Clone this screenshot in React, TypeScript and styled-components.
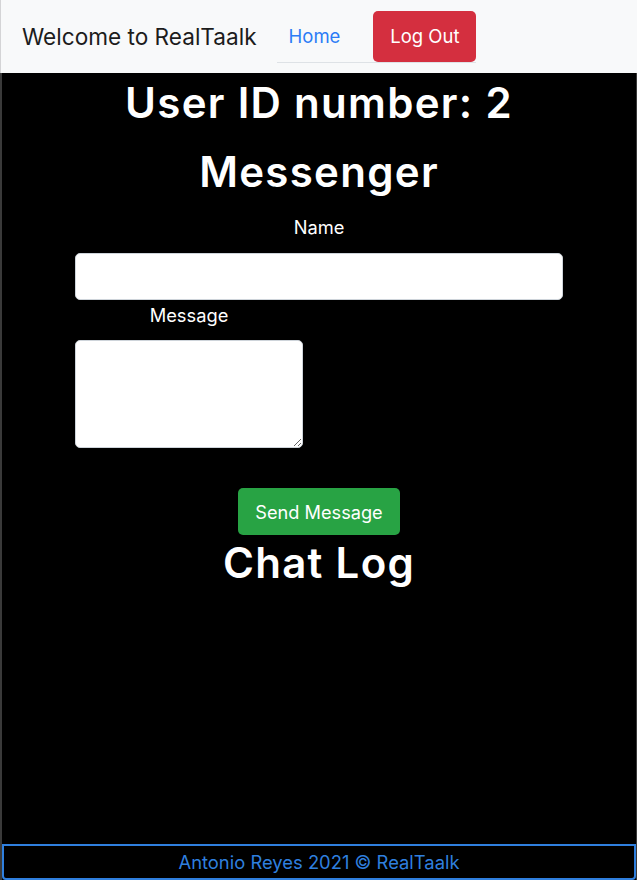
import React from "react";
import styled, { createGlobalStyle } from "styled-components";

const GlobalStyle = createGlobalStyle`
  html, body {
    margin: 0;
    padding: 0;
    background: #000;
  }
  * { box-sizing: border-box; }
  body {
    font-family: Inter, "Noto Sans", "Liberation Sans", sans-serif;
  }
`;

const Page = styled.div`
  min-height: 100vh;
  display: flex;
  flex-direction: column;
`;

const NavBar = styled.nav`
  height: 73px;
  display: flex;
  align-items: center;
  padding-left: 21px;
  background: #f8f9fa;
  border-left: 1px solid #d4d4d6;
`;

const Brand = styled.a`
  font-size: 22.6px;
  line-height: 30px;
  color: #1c1c1c;
  text-decoration: none;
  white-space: nowrap;
`;

const NavList = styled.ul`
  display: flex;
  align-items: center;
  margin: 0 0 0 20px;
  padding: 0;
  list-style: none;
  border-bottom: 1px solid #dee2e6;
`;

const NavItem = styled.li`
  display: flex;
`;

const NavLink = styled.a`
  padding: 0 12px;
  font-size: 18.5px;
  line-height: 28px;
  color: #2b7cf6;
  text-decoration: none;
`;

const Button = styled.button<{ $variant: "danger" | "success" }>`
  border: none;
  border-radius: 5px;
  font-family: inherit;
  color: #fff;
  background: ${(p) => (p.$variant === "danger" ? "#d42f3f" : "#28a344")};
  cursor: pointer;
`;

const LogOutButton = styled(Button)`
  margin-left: 21px;
  width: 103px;
  height: 51px;
  font-size: 18.5px;
  padding: 0;
`;

const Shell = styled.div`
  flex: 1;
  display: flex;
  flex-direction: column;
  border-left: 2px solid #3a3a3a;
  border-right: 1px solid #3a3a3a;
`;

const Main = styled.main`
  flex: 1;
  padding-top: 6px;
  color: #fff;
  text-align: center;
`;

const Heading = styled.h1<{ $top?: number; $gap?: number }>`
  margin: ${(p) => p.$top ?? 0}px 0 ${(p) => p.$gap ?? 0}px;
  font-size: 42px;
  line-height: 48px;
  font-weight: 600;
  letter-spacing: 1.3px;
`;

const Form = styled.form`
  width: 488px;
  margin: 18px auto 0;
  display: flex;
  flex-direction: column;
  align-items: flex-start;
`;

const Field = styled.div<{ $width: number }>`
  width: ${(p) => p.$width}px;
  display: flex;
  flex-direction: column;
  align-items: center;
`;

const Label = styled.label<{ $gap: number }>`
  display: block;
  font-size: 18.3px;
  line-height: 27.5px;
  margin-bottom: ${(p) => p.$gap}px;
`;

const TextInput = styled.input`
  width: 100%;
  height: 47px;
  border: 1px solid #ced4da;
  border-radius: 5px;
  background: #fff;
  margin-bottom: 2px;
`;

const TextArea = styled.textarea`
  width: 100%;
  height: 108px;
  border: 1px solid #ced4da;
  border-radius: 5px;
  background: #fff;
  display: block;
  margin: 0;
`;

const SendButton = styled(Button)`
  align-self: center;
  margin-top: 40px;
  width: 162px;
  height: 47px;
  font-size: 18.2px;
  padding: 0;
`;

const Footer = styled.footer`
  height: 36px;
  border: 2px solid #2f7fde;
  border-radius: 0 0 4px 4px;
  display: flex;
  align-items: center;
  justify-content: center;
  color: #2f7fde;
  font-size: 18.4px;
  line-height: 27px;
`;

export default function App() {
  return (
    <Page>
      <GlobalStyle />
      <NavBar>
        <Brand href="#">Welcome to RealTaalk</Brand>
        <NavList>
          <NavItem>
            <NavLink href="#">Home</NavLink>
          </NavItem>
          <NavItem>
            <LogOutButton $variant="danger" type="button">
              Log Out
            </LogOutButton>
          </NavItem>
        </NavList>
      </NavBar>
      <Shell>
        <Main>
          <Heading $gap={21}>User ID number: 2</Heading>
          <Heading>Messenger</Heading>
          <Form onSubmit={(e) => e.preventDefault()}>
            <Field $width={488}>
              <Label $gap={11} htmlFor="name">Name</Label>
              <TextInput id="name" type="text" />
            </Field>
            <Field $width={228}>
              <Label $gap={11} htmlFor="message">Message</Label>
              <TextArea id="message" />
            </Field>
            <SendButton $variant="success" type="submit">
              Send Message
            </SendButton>
          </Form>
          <Heading $top={4}>Chat Log</Heading>
        </Main>
        <Footer>Antonio Reyes 2021 © RealTaalk</Footer>
      </Shell>
    </Page>
  );
}
